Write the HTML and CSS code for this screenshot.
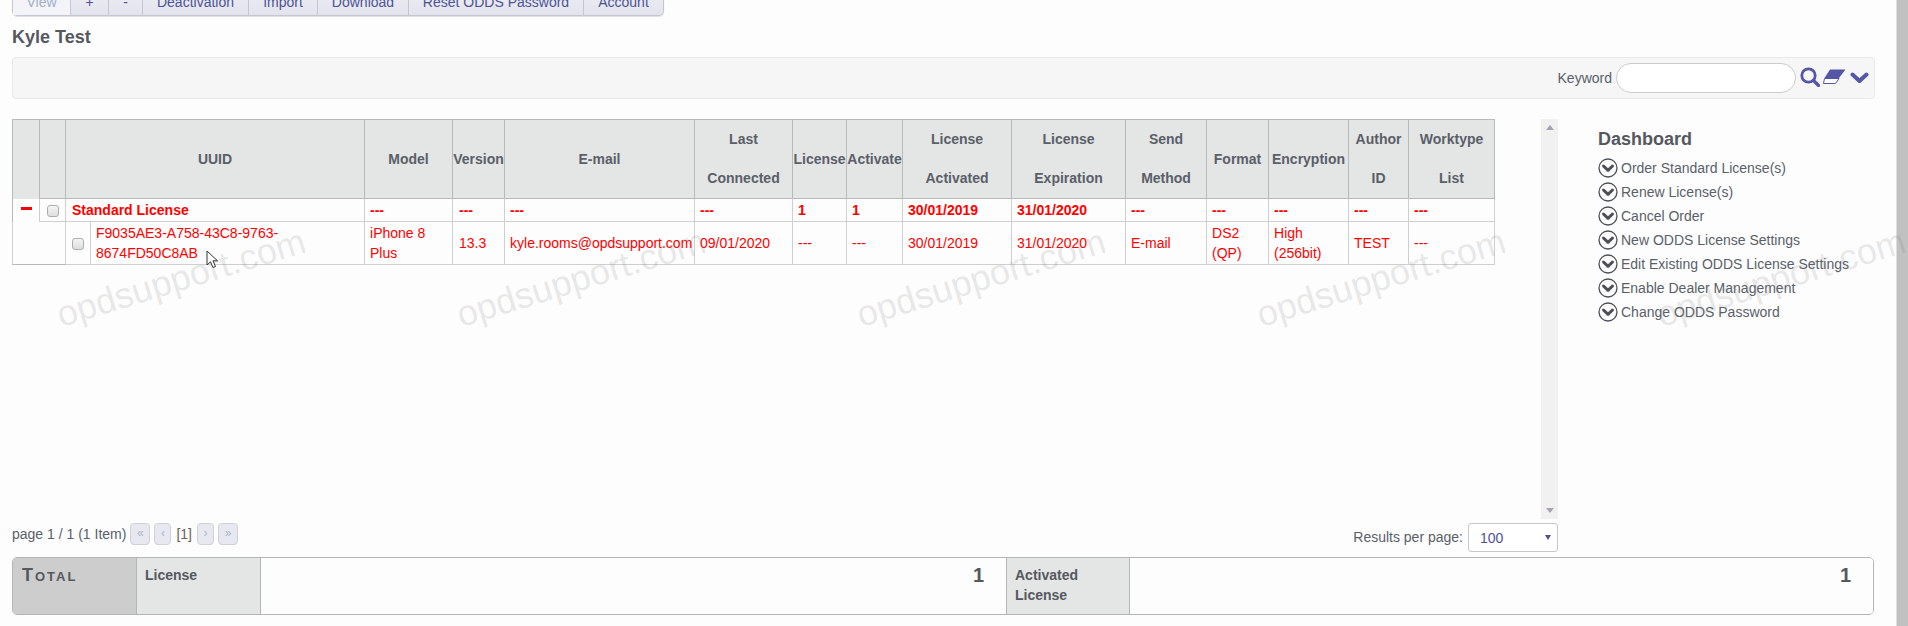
FILE: index.html
```html
<!DOCTYPE html>
<html lang="en">
<head>
<meta charset="utf-8">
<title>Kyle Test</title>
<link rel="stylesheet" href="styles.css">
</head>
<body>
<div class="page">
  <main class="main">
    <nav class="toolbar">
      <span class="tool tool-view">View</span><span class="tool tool-plus">+</span><span class="tool tool-minus">-</span><span class="tool tool-deact">Deactivation</span><span class="tool tool-import">Import</span><span class="tool tool-download">Download</span><span class="tool tool-reset">Reset ODDS Password</span><span class="tool tool-account">Account</span>
    </nav>
    <h1 class="title">Kyle Test</h1>
    <div class="search">
      <label class="search-label">Keyword</label>
      <span class="search-input"></span>
      <svg class="icon-search" viewBox="0 0 20 20"><circle cx="8.5" cy="8.5" r="6.7" fill="none" stroke="#5556a6" stroke-width="2.8"/><path d="M13.5 13.5L18.5 18.5" stroke="#5556a6" stroke-width="3.2" stroke-linecap="round"/></svg>
      <svg class="icon-eraser" viewBox="0 0 23 15"><path d="M7 0.500H22.500L16 9H1.500z" fill="#5556a6"/><path d="M1.500 9.500H16L12.500 14.500H0.500z" fill="#fff" stroke="#5556a6" stroke-width="1"/></svg>
      <svg class="icon-chevron" viewBox="0 0 19 12"><path d="M2.500 2.500L9.500 9L16.500 2.500" fill="none" stroke="#5556a6" stroke-width="4" stroke-linecap="round" stroke-linejoin="round"/></svg>
    </div>
    <div class="middle">
      <div class="list-area">
        <div class="table-scroll">
          <div class="table-wrap">
            <table class="grid">
              <colgroup>
                <col class="c-exp"><col class="c-chk"><col class="c-chk2"><col class="c-uuid"><col class="c-model"><col class="c-ver"><col class="c-mail"><col class="c-last"><col class="c-lic"><col class="c-act"><col class="c-date1"><col class="c-date2"><col class="c-send"><col class="c-fmt"><col class="c-enc"><col class="c-auth"><col class="c-work">
              </colgroup>
              <thead>
                <tr>
                  <th class="th-exp"></th><th></th><th colspan="2">UUID</th><th>Model</th><th>Version</th><th>E-mail</th><th>Last<br>Connected</th><th>License</th><th>Activate</th><th>License<br>Activated</th><th>License<br>Expiration</th><th>Send<br>Method</th><th>Format</th><th>Encryption</th><th>Author<br>ID</th><th>Worktype<br>List</th>
                </tr>
              </thead>
              <tbody>
                <tr class="row-group">
                  <td class="td-exp"><span class="collapse"></span></td>
                  <td class="td-chk"><span class="check"></span></td>
                  <td class="td-std" colspan="2">Standard License</td>
                  <td>---</td><td class="td-ver">---</td><td>---</td><td>---</td><td>1</td><td>1</td><td>30/01/2019</td><td>31/01/2020</td><td>---</td><td>---</td><td>---</td><td>---</td><td>---</td>
                </tr>
                <tr class="row-item">
                  <td class="td-blank" colspan="2"></td>
                  <td class="td-chk"><span class="check"></span></td>
                  <td>F9035AE3-A758-43C8-9763-<br>8674FD50C8AB</td>
                  <td>iPhone 8<br>Plus</td><td class="td-ver">13.3</td><td>kyle.rooms@opdsupport.com</td><td>09/01/2020</td><td>---</td><td>---</td><td>30/01/2019</td><td>31/01/2020</td><td>E-mail</td><td>DS2<br>(QP)</td><td>High<br>(256bit)</td><td>TEST</td><td>---</td>
                </tr>
              </tbody>
            </table>
          </div>
          <div class="vscroll"><span class="arrow-up"></span><span class="arrow-down"></span></div>
        </div>
        <div class="pager-row">
          <div class="pager">
            <span class="pager-text">page 1 / 1 (1 Item)</span>
            <span class="pbtn pbtn-wide">«</span><span class="pbtn">‹</span><span class="pager-cur">[1]</span><span class="pbtn">›</span><span class="pbtn pbtn-wide">»</span>
          </div>
          <div class="perpage">
            <span class="perpage-label">Results per page:</span>
            <span class="perpage-select"><span>100</span><i class="select-arrow"></i></span>
          </div>
        </div>
      </div>
      <aside class="dash">
        <h2 class="dash-title">Dashboard</h2>
        <ul class="dash-list">
          <li><svg class="dash-icon" viewBox="0 0 20 20"><circle cx="10" cy="10" r="9" fill="none" stroke="#4d5058" stroke-width="1.300"/><path d="M5.500 8L10 12.300L14.500 8" fill="none" stroke="#4d5058" stroke-width="3" stroke-linecap="round" stroke-linejoin="round"/></svg>Order Standard License(s)</li>
          <li><svg class="dash-icon" viewBox="0 0 20 20"><circle cx="10" cy="10" r="9" fill="none" stroke="#4d5058" stroke-width="1.300"/><path d="M5.500 8L10 12.300L14.500 8" fill="none" stroke="#4d5058" stroke-width="3" stroke-linecap="round" stroke-linejoin="round"/></svg>Renew License(s)</li>
          <li><svg class="dash-icon" viewBox="0 0 20 20"><circle cx="10" cy="10" r="9" fill="none" stroke="#4d5058" stroke-width="1.300"/><path d="M5.500 8L10 12.300L14.500 8" fill="none" stroke="#4d5058" stroke-width="3" stroke-linecap="round" stroke-linejoin="round"/></svg>Cancel Order</li>
          <li><svg class="dash-icon" viewBox="0 0 20 20"><circle cx="10" cy="10" r="9" fill="none" stroke="#4d5058" stroke-width="1.300"/><path d="M5.500 8L10 12.300L14.500 8" fill="none" stroke="#4d5058" stroke-width="3" stroke-linecap="round" stroke-linejoin="round"/></svg>New ODDS License Settings</li>
          <li><svg class="dash-icon" viewBox="0 0 20 20"><circle cx="10" cy="10" r="9" fill="none" stroke="#4d5058" stroke-width="1.300"/><path d="M5.500 8L10 12.300L14.500 8" fill="none" stroke="#4d5058" stroke-width="3" stroke-linecap="round" stroke-linejoin="round"/></svg>Edit Existing ODDS License Settings</li>
          <li><svg class="dash-icon" viewBox="0 0 20 20"><circle cx="10" cy="10" r="9" fill="none" stroke="#4d5058" stroke-width="1.300"/><path d="M5.500 8L10 12.300L14.500 8" fill="none" stroke="#4d5058" stroke-width="3" stroke-linecap="round" stroke-linejoin="round"/></svg>Enable Dealer Management</li>
          <li><svg class="dash-icon" viewBox="0 0 20 20"><circle cx="10" cy="10" r="9" fill="none" stroke="#4d5058" stroke-width="1.300"/><path d="M5.500 8L10 12.300L14.500 8" fill="none" stroke="#4d5058" stroke-width="3" stroke-linecap="round" stroke-linejoin="round"/></svg>Change ODDS Password</li>
        </ul>
      </aside>
    </div>
    <div class="totals">
      <div class="t-head">Total</div>
      <div class="t-label t-label-1">License</div>
      <div class="t-value">1</div>
      <div class="t-label t-label-2">Activated<br>License</div>
      <div class="t-value">1</div>
    </div>
  </main>
  <div class="page-scroll"></div>
</div>
<div class="wm wm1">opdsupport.com</div>
<div class="wm wm2">opdsupport.com</div>
<div class="wm wm3">opdsupport.com</div>
<div class="wm wm4">opdsupport.com</div>
<div class="wm wm5">opdsupport.com</div>
<svg class="cursor" viewBox="0 0 13 20"><path d="M1 1V15L4.500 11.800L7 17.500L9.500 16.500L7 10.800H11.500z" fill="#fff" stroke="#333" stroke-width="1"/></svg>
</body>
</html>
```
FILE: styles.css
```css
* { box-sizing: border-box; }
html, body { margin: 0; height: 100%; overflow: hidden; }
body {
  background: #fdfdfd;
  color: #5a5f69;
  font-family: "Liberation Sans", Arial, sans-serif;
  font-size: 14px;
}
.page { display: flex; height: 626px; overflow: hidden; }
.main { width: 1896px; flex: none; padding: 0 22px 0 12px; }
.page-scroll { flex: 1; background: #c1c1c1; border-left: 1px solid #dedede; }

.toolbar {
  display: flex;
  width: 652px;
  height: 32px;
  margin-top: -16px;
  border: 1px solid #c4c6d0;
  border-top: 0;
  border-radius: 0 0 5px 5px;
  background: linear-gradient(#f0f0f6, #e2e3ed);
  box-shadow: 0 1px 1px rgba(0,0,0,.12);
  color: #4d5394;
  line-height: 37px;
  text-align: center;
}
.tool { border-right: 1px solid #c4c6d0; flex: none; }
.tool-view { width: 58px; color: #9fb0c9; background: #f4f4f8; }
.tool-plus { width: 38px; }
.tool-minus { width: 34px; }
.tool-deact { width: 106px; }
.tool-import { width: 69px; }
.tool-download { width: 91px; }
.tool-reset { width: 175px; }
.tool-account { flex: 1; border-right: 0; }

.title { margin: 12px 0 0; height: 29px; font-size: 18px; line-height: 18px; font-weight: bold; color: #55585f; }

.search {
  display: flex;
  align-items: center;
  justify-content: flex-end;
  width: 1863px;
  height: 42px;
  padding: 0 5px 0 0;
  background: #f6f6f6;
  border: 1px solid #e9e9e9;
  border-radius: 4px;
}
.search-label { margin-right: 4px; }
.search-input { width: 180px; height: 30px; background: #fff; border: 1px solid #ccc; border-radius: 15px; }
.icon-search { width: 20px; height: 20px; margin: -2px 0 0 4px; }
.icon-eraser { width: 23px; height: 15px; margin: -3px 0 0 3px; }
.icon-chevron { width: 19px; height: 12px; margin: 0 0 0 4px; }

.middle { display: flex; margin-top: 20px; }
.list-area { width: 1546px; flex: none; }
.table-scroll { display: flex; height: 400px; }
.table-wrap { width: 1529px; flex: none; }
.vscroll { width: 17px; background: #f1f1f1; display: flex; flex-direction: column; justify-content: space-between; align-items: center; padding: 6px 0; }
.arrow-up { border: 4px solid transparent; border-top: 0; border-bottom: 5px solid #a9a2b3; }
.arrow-down { border: 4px solid transparent; border-bottom: 0; border-top: 5px solid #a9a2b3; }

.grid { table-layout: fixed; border-collapse: collapse; width: 1482px; border: 1px solid #b9b9b9; color: #f00; }
.c-exp { width: 27px; } .c-chk { width: 26px; } .c-chk2 { width: 25px; } .c-uuid { width: 274px; }
.c-model { width: 88px; } .c-ver { width: 52px; } .c-mail { width: 190px; } .c-last { width: 98px; }
.c-lic { width: 54px; } .c-act { width: 56px; } .c-date1 { width: 109px; } .c-date2 { width: 114px; }
.c-send { width: 81px; } .c-fmt { width: 62px; } .c-enc { width: 80px; } .c-auth { width: 60px; } .c-work { width: 86px; }
.grid th {
  height: 79px;
  padding: 0;
  background: #e4e5e5;
  border: 1px solid #b9b9b9;
  color: #5a5f69;
  font-weight: bold;
  line-height: 39px;
  text-align: center;
  white-space: nowrap;
}
.grid td { border: 1px solid #cfcfcf; padding: 0 0 0 5px; white-space: nowrap; }
.row-group td { height: 23px; font-weight: bold; line-height: 20px; }
.row-item td { height: 43px; line-height: 20px; }
.grid .th-exp { border-bottom: 0; }
.grid .td-exp { border-left: 1px solid #b9b9b9; border-bottom: 0; border-top: 0; text-align: center; padding: 0; }
.grid .td-blank { border-bottom: 1px solid #b9b9b9; border-top: 0; }
.grid .td-chk { padding: 0; text-align: center; }
.grid .td-std, .grid .td-ver { padding-left: 6px; }
.collapse { display: block; width: 11px; height: 3px; background: #f00; margin: 0 auto 3px; }
.check { display: inline-block; width: 12px; height: 12px; vertical-align: middle; background: linear-gradient(#f4f4f4, #dedede); border: 1px solid #aeaeae; border-radius: 3px; }

.pager-row { display: flex; justify-content: space-between; align-items: flex-start; height: 38px; padding-top: 4px; }
.pager { display: flex; align-items: center; height: 22px; gap: 4px; }
.pbtn { width: 17px; height: 22px; background: #e8e9f0; border: 1px solid #cfd0da; border-radius: 4px; color: #a9b6cc; font-size: 12px; line-height: 19px; text-align: center; }
.pbtn-wide { width: 20px; }
.pager-cur { color: #6a6055; margin: 0 1px; }
.perpage { display: flex; align-items: flex-start; gap: 5px; }
.perpage-label { line-height: 29px; }
.perpage-select { display: flex; justify-content: space-between; align-items: center; width: 90px; height: 29px; padding: 0 6px 0 11px; background: #fff; border: 1px solid #c8c8c8; border-radius: 3px; color: #4d5394; }
.select-arrow { border: 3px solid transparent; border-bottom: 0; border-top: 5px solid #4d5394; }

.dash { margin-left: 40px; padding-top: 10px; }
.dash-title { margin: 0 0 7px; font-size: 18px; line-height: 20px; font-weight: bold; color: #55585f; }
.dash-list { margin: 0; padding: 0; list-style: none; }
.dash-list li { display: flex; align-items: center; gap: 3px; height: 24px; white-space: nowrap; }
.dash-icon { width: 20px; height: 20px; flex: none; }

.totals {
  display: grid;
  grid-template-columns: 124px 124px 745px 124px 1fr;
  width: 1862px;
  height: 58px;
  border: 1px solid #b5b5b5;
  border-radius: 5px;
  overflow: hidden;
  color: #55585f;
  font-weight: bold;
}
.t-head { padding: 7px 9px; background: #cdcdcd; border-right: 1px solid #b5b5b5; font-size: 18px; font-variant: small-caps; letter-spacing: 2px; line-height: 20px; }
.t-label { padding: 7px 8px; background: #e4e5e5; border-right: 1px solid #b5b5b5; line-height: 20px; }
.t-label-2 { border-left: 1px solid #b5b5b5; }
.t-value { padding: 5px 22px 0 0; background: #fdfdfd; font-size: 20px; line-height: 24px; text-align: right; }

.wm {
  position: absolute;
  font-family: "Liberation Sans", sans-serif;
  font-size: 36px;
  line-height: 40px;
  color: rgba(120,120,120,.17);
  white-space: nowrap;
  transform: rotate(-17deg);
  pointer-events: none;
}
.wm1 { left: 52px; top: 258px; }
.wm2 { left: 452px; top: 258px; }
.wm3 { left: 852px; top: 258px; }
.wm4 { left: 1252px; top: 258px; }
.wm5 { left: 1652px; top: 258px; }
.cursor { position: absolute; left: 206px; top: 250px; width: 13px; height: 20px; }
```
